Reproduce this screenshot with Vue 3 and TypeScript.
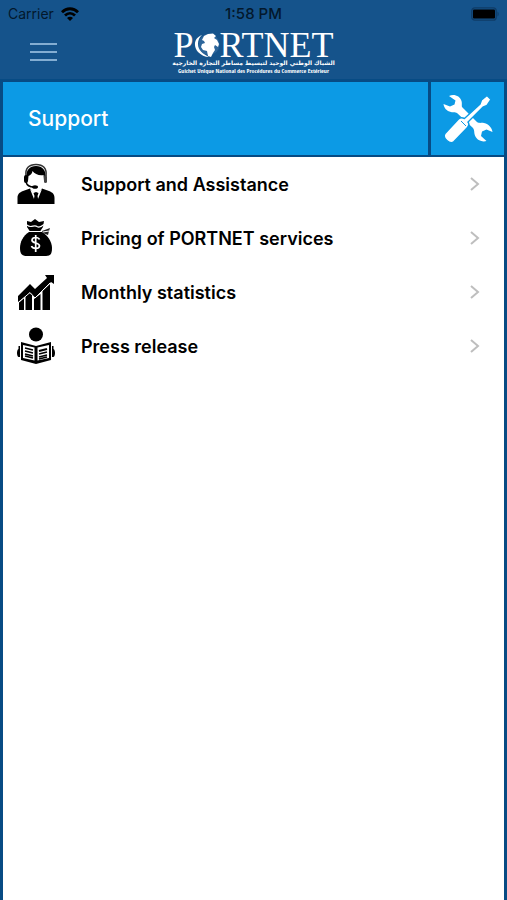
<script setup lang="ts">
import { ref } from 'vue'

type IconName = 'agent' | 'money' | 'chart' | 'press'

interface MenuEntry {
  icon: IconName
  label: string
}

const menuOpen = ref(false)

const entries: MenuEntry[] = [
  { icon: 'agent', label: 'Support and Assistance' },
  { icon: 'money', label: 'Pricing of PORTNET services' },
  { icon: 'chart', label: 'Monthly statistics' },
  { icon: 'press', label: 'Press release' },
]
</script>

<template>
  <div class="screen">
    <header class="top">
      <div class="status">
        <div class="carrier">
          <span>Carrier</span>
          <svg width="18" height="14" viewBox="0 0 18 14" aria-hidden="true">
            <g fill="none" stroke="#000" stroke-width="2.8">
              <path d="M1 5.2C5.5.6 12.5.6 17 5.2" />
              <path d="M4 8.500c3-2.900 7-2.900 10 0" />
            </g>
            <path d="M9 14 6 11c1.700-1.600 4.300-1.600 6 0z" />
          </svg>
        </div>
        <span class="time">1:58 PM</span>
        <svg class="battery" width="28" height="14" viewBox="0 0 28 14" aria-hidden="true">
          <rect x=".8" y=".8" width="24.400" height="12.400" rx="3" fill="none" stroke="#0f3c67" stroke-width="1.300" />
          <rect x="2" y="2.500" width="22" height="9" rx="1" />
          <path d="M26.500 4.500c1.500.7 1.500 4.300 0 5z" fill="#0f3c67" />
        </svg>
      </div>
      <div class="brandbar">
        <button class="burger" type="button" aria-label="Menu" :aria-expanded="menuOpen" @click="menuOpen = !menuOpen">
          <span></span><span></span><span></span>
        </button>
        <div class="logo">
          <div class="wordmark">
            <span>P</span>
            <svg width="26" height="26" viewBox="0 0 26 26" aria-hidden="true">
              <circle cx="15" cy="12.500" r="10.500" fill="#2c659a" />
              <path d="M8 3C0 6-1 14 4 20c3 3 7 5 11 5C9 22 4 18 4 12c0-4 1.500-7 4-9z" fill="#fff" />
              <path d="M8 8l2-4 4-2 5-.5 3 2.500-2 2 3 2 2 4-1 3-3-2-1 2 1 3-2 3-2 4-3-1-1-5-4-1-2-3 1-3 3-1-1-2z" fill="#fff" />
            </svg>
            <span>RTNET</span>
          </div>
          <div class="arabic" lang="ar" dir="rtl">الشباك الوطني الوحيد لتبسيط مساطر التجارة الخارجية</div>
          <div class="french" lang="fr">Guichet Unique National des Procédures du Commerce Extérieur</div>
        </div>
      </div>
    </header>

    <main class="content">
      <div class="titlebar">
        <h1>Support</h1>
        <div class="tools">
          <svg width="50" height="50" viewBox="0 0 50 50" aria-hidden="true">
            <path
              fill="#fff"
              d="M6 2C11-.5 17 2 18.500 7c.7 2.500 0 4 .5 6l15 15c2 1.500 4 .5 7 1 5 1 8 5 8.500 9l-6-2.500-4.500 2-1 4.500 5.500 5c-5 1.500-11-1.500-12-7-.4-2 0-4-1.500-6L14 19c-2-1.500-4-.5-6-1-4.500-1-7-4-7.500-8L7 12.500l4.500-2 1-4z"
            />
            <path
              fill="#fff"
              stroke="#0c9ae5"
              stroke-width="1.400"
              d="M44 1.500 48 5.500l-4 6-4 1.500L25 28c1.500 2 1 4-1 6L11 47.500C7 51-1 44 2 39.500L15.500 25c2-2 4-1.500 6-.5L37 10l1.500-4z"
            />
            <path d="m18 27 5 5" stroke="#0c9ae5" stroke-width="1" />
          </svg>
        </div>
      </div>

      <nav class="list" aria-label="Support">
        <a v-for="entry in entries" :key="entry.icon" class="row" href="#">
          <svg class="icon" width="40" height="42" viewBox="0 0 40 42" aria-hidden="true">
            <g v-if="entry.icon === 'agent'">
              <path d="M1.500 41v-6c0-4 2-5.500 5.500-7l7-2.500 6 8 6-8 7 2.500c3.500 1.500 5.500 3 5.500 7v6z" />
              <path d="m14 26 6 15 6-15-6 5z" fill="#fff" />
              <path d="m17.500 30 2.500-1 2.500 1-1 3 1.500 8h-6l1.500-8z" />
              <path d="M11 12c0 8 3 16 9 16s9-8 9-16l-3-6H14z" fill="#fff" />
              <path d="M10.500 14c-.5-7 3-11 9.500-11s10 4 9.500 11l-1.500 4-.5-6c-4 1-9-1-11-4-.5 3-2 4-4 5l-.5 5z" />
              <path d="M10 13C9 5 13 1.500 20 1.500S31 5 30 13" fill="none" stroke="#333" stroke-width="1.500" />
              <rect x="8" y="12" width="4" height="8" rx="2" />
              <rect x="28" y="12" width="3" height="8" rx="1.500" fill="#444" />
              <path d="M10 19c1 4 4 5 8 5" fill="none" stroke="#000" stroke-width="1.400" />
              <ellipse cx="19" cy="24" rx="3" ry="1.800" />
            </g>
            <g v-else-if="entry.icon === 'money'">
              <path d="M13 15C7 19 4 25 4 31c0 6 2 8 7 8h19c5 0 6-3 6-8 0-7-5-13-10-16z" />
              <path d="m11 4 4 1 4-3 4 3 5-1-1 6-3 4.500H14L11 10z" />
              <path d="M11 8c4 4 7-1 10 1.500 2 1.500 4 .5 7-2M13 14.500h13" fill="none" stroke="#fff" stroke-width="1.200" />
              <path d="m26 14 8-3-1 3-1 4-5-2z" fill="#222" />
              <path d="m27 15 6-1" stroke="#fff" />
              <path
                d="M23.500 22.500c-1-2.500-7-3-7.500.5s8 2.500 7.500 6-7 3-8 0M19.700 18v17"
                fill="none"
                stroke="#fff"
                stroke-width="1.700"
              />
            </g>
            <g v-else-if="entry.icon === 'chart'">
              <path d="M3 31.500 8 27v12H3zM9.500 25l3.500-3 3 2v15H9.500zM18 28l6.500-5v16H18zM26.500 20l7.500-7v26h-7.500z" />
              <path d="m2 25 12-12 5 5L31 7l-2-3h9v9l-3-2-16 16-5-5L2 31z" />
              <path d="m3 31 11-9.500 5 5.500L34 12" fill="none" stroke="#fff" stroke-width="1" />
            </g>
            <g v-else>
              <circle cx="20" cy="9.500" r="7" />
              <path d="M4 21H2.500v3c-2 1-2 7 0 8H4zm32 0h1.500v3c2 1 2 7 0 8H36z" />
              <path d="M5 17l15 4 15-4v18l-15 4-15-4z" />
              <path d="m7 20 11.500 2.500v13L7 33zM33 20l-11.500 2.500v13L33 33z" fill="#fff" />
              <path
                d="m9 23 8 2m-8 1 8 2m-8 1 8 2m-8 0 8 2m6-4 8-2m-8 5 8-2m-8 4 8-2"
                stroke="#000"
                stroke-width="1.500"
              />
              <path d="m23 26 8-2" stroke="#000" stroke-width="2" />
            </g>
          </svg>
          <span class="label">{{ entry.label }}</span>
          <svg class="chevron" width="10" height="16" viewBox="0 0 10 16" aria-hidden="true">
            <path d="m1 2 7 6-7 6" fill="none" stroke="#bebebe" stroke-width="2" />
          </svg>
        </a>
      </nav>
    </main>
  </div>
</template>

<style>
body {
  margin: 0;
}
</style>

<style scoped>
.screen {
  box-sizing: border-box;
  display: flex;
  flex-direction: column;
  min-height: 100vh;
  background: #074b84;
  font-family: Inter, "Liberation Sans", sans-serif;
  color: #000;
}

.top {
  background: #15538b;
  padding-bottom: 4px;
}

.status {
  display: grid;
  grid-template-columns: 1fr auto 1fr;
  align-items: center;
  height: 28px;
  padding: 0 8px;
  font-size: 14px;
  line-height: 28px;
  color: #03182c;
}

.carrier {
  display: flex;
  align-items: center;
  gap: 7px;
}

.time {
  font-size: 15px;
  font-weight: 500;
}

.battery {
  justify-self: end;
}

.brandbar {
  display: grid;
  grid-template-columns: 1fr auto 1fr;
  align-items: center;
  height: 47px;
}

.burger {
  display: flex;
  flex-direction: column;
  gap: 6px;
  justify-self: start;
  margin-left: 24px;
  padding: 6px;
  border: 0;
  background: none;
}

.burger span {
  width: 27px;
  height: 2px;
  background: #83add2;
}

.logo {
  display: flex;
  flex-direction: column;
  align-items: center;
  width: 162px;
  padding-top: 4px;
  color: #fff;
  white-space: nowrap;
}

.wordmark {
  display: flex;
  align-items: center;
  height: 26px;
  font-family: "Liberation Serif", serif;
  font-size: 36px;
  line-height: 24px;
}

.arabic {
  height: 9px;
  font-family: "DejaVu Sans", sans-serif;
  font-size: 6px;
  font-weight: 700;
  line-height: 9px;
}

.french {
  height: 8px;
  font-family: "Open Sans Condensed", "Liberation Sans Narrow", "Liberation Sans", sans-serif;
  font-size: 6px;
  font-weight: 700;
  line-height: 8px;
}

.content {
  display: flex;
  flex: 1;
  flex-direction: column;
  margin: 3px 3px 0;
}

.titlebar {
  display: flex;
  gap: 3px;
  height: 73px;
  margin-bottom: 2px;
}

h1 {
  flex: 1;
  margin: 0;
  padding-left: 25px;
  background: #0c9ae5;
  color: #fff;
  font-size: 21px;
  font-weight: 500;
  line-height: 73px;
}

.tools {
  display: grid;
  place-items: center;
  width: 73px;
  background: #0c9ae5;
}

.list {
  flex: 1;
  background: #fff;
}

.row {
  display: flex;
  align-items: center;
  height: 54px;
  padding: 0 24px 0 13px;
  color: #000;
  text-decoration: none;
}

.label {
  flex: 1;
  padding-left: 25px;
  font-size: 18px;
  font-weight: 600;
}
</style>
